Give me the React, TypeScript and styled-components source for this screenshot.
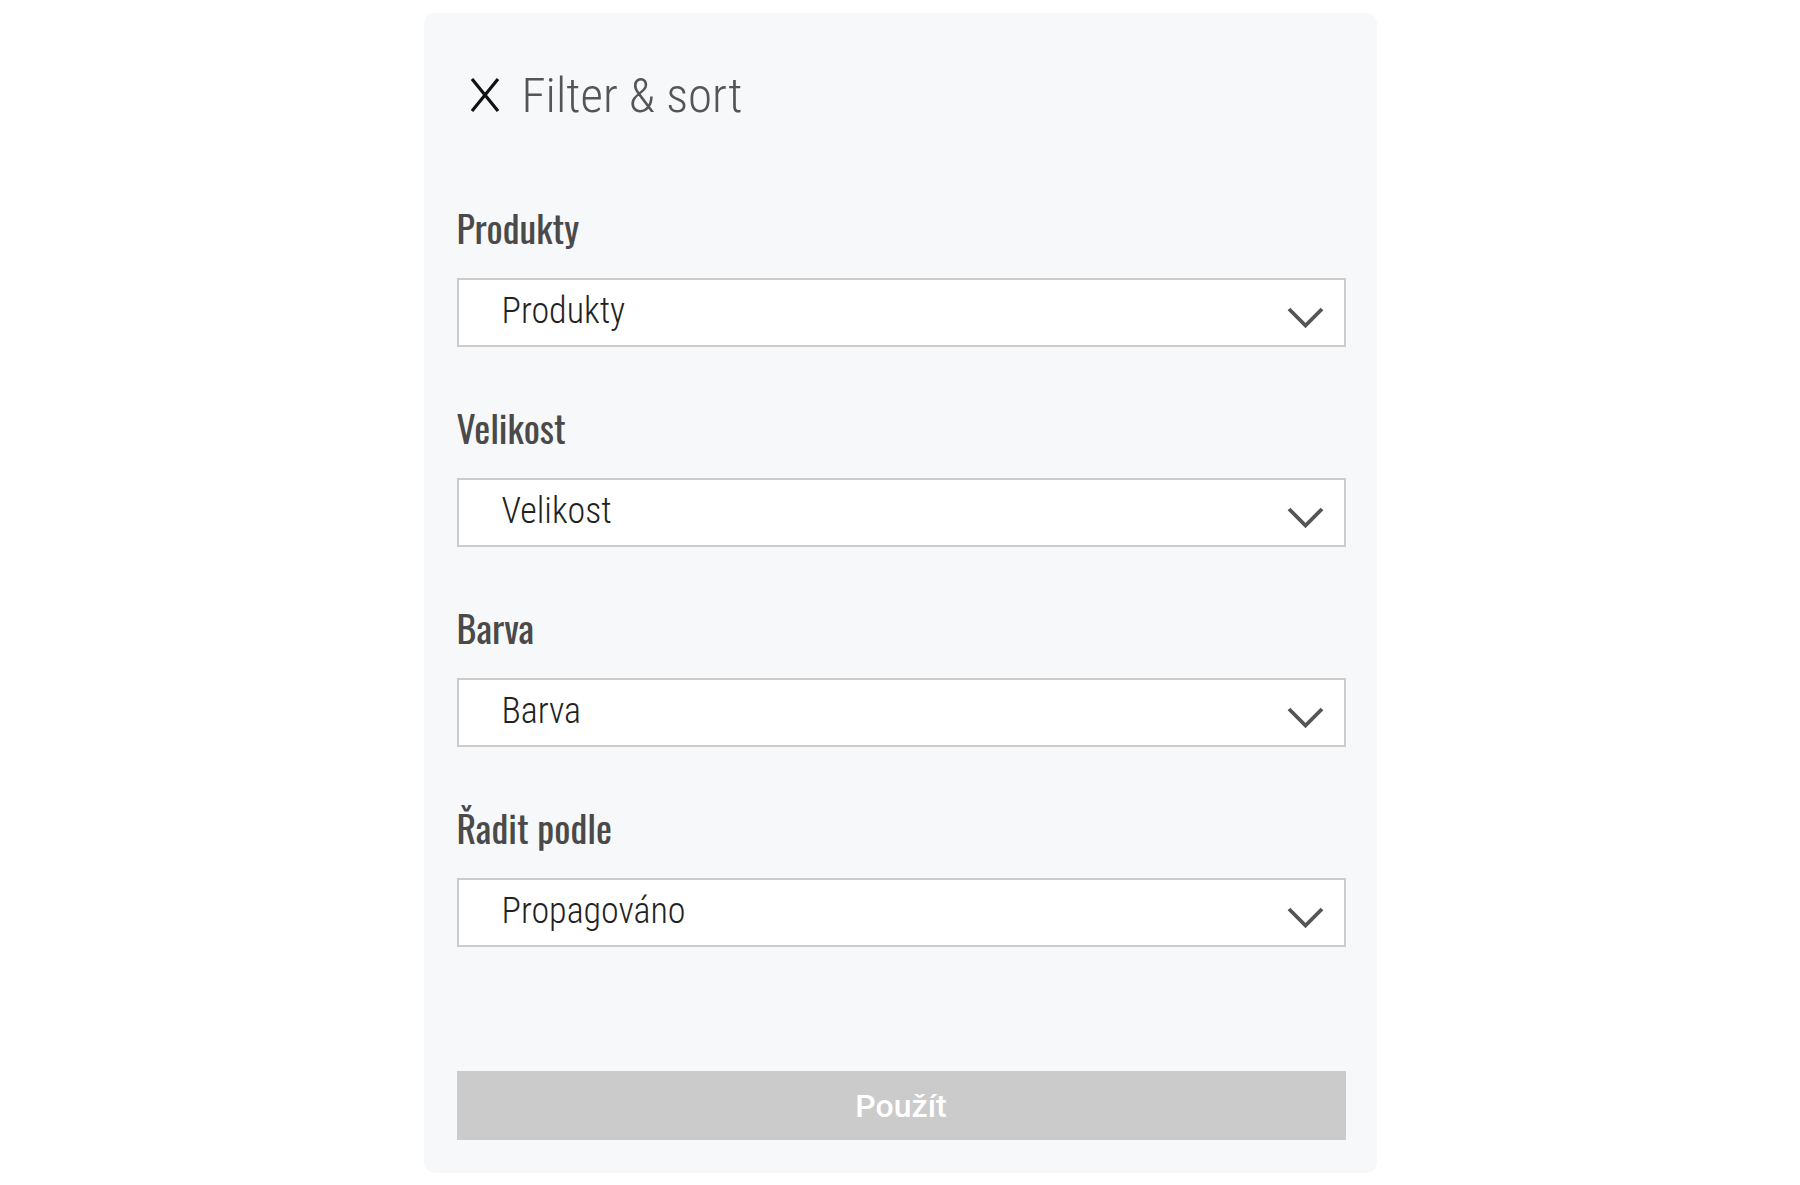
import React from "react";
import styled, { createGlobalStyle } from "styled-components";

const Global = createGlobalStyle`
  html, body { margin: 0; padding: 0; background: #ffffff; }
  body { font-family: "Roboto", "Liberation Sans", sans-serif; }
`;

const Page = styled.div`
  display: flex;
  justify-content: center;
  padding-top: 13px;
`;

const Panel = styled.div`
  width: 953px;
  height: 1160px;
  box-sizing: border-box;
  background: #f7f8fa;
  border-radius: 10px;
  padding: 0 31px 0 33px;
  display: flex;
  flex-direction: column;
`;

const Header = styled.div`
  display: flex;
  align-items: center;
  gap: 22px;
  height: 164px;
  padding-left: 13px;
  margin-bottom: 29px;
`;

const CloseButton = styled.button`
  border: 0;
  background: transparent;
  padding: 0;
  width: 30px;
  height: 36px;
  display: flex;
  align-items: center;
  justify-content: center;
  cursor: pointer;
`;

const Title = styled.h1`
  margin: 0;
  font-family: "Roboto Condensed", "Roboto", sans-serif;
  font-stretch: 80%;
  font-weight: 300;
  font-size: 49px;
  line-height: 1;
  color: #555555;
`;

const Fields = styled.div`
  display: flex;
  flex-direction: column;
  gap: 59px;
`;

const Field = styled.div`
  display: flex;
  flex-direction: column;
  gap: 30px;
`;

const Label = styled.label`
  font-family: "Oswald", "Liberation Sans Narrow", "Roboto Condensed", "Roboto", sans-serif;
  font-stretch: 75%;
  font-weight: 400;
  font-size: 38px;
  line-height: 42px;
  color: #4a4a4a;
`;

const SelectBox = styled.div`
  height: 69px;
  box-sizing: border-box;
  border: 2px solid #cccccc;
  background: #ffffff;
  display: flex;
  align-items: center;
  justify-content: space-between;
  padding: 0 20px 0 43px;
`;

const SelectText = styled.span`
  font-family: "Roboto Condensed", "Roboto", sans-serif;
  font-stretch: 80%;
  font-weight: 300;
  font-size: 36px;
  line-height: 1;
  color: #222222;
  margin-top: -4px;
`;

const Chevron = styled.svg`
  width: 37px;
  height: 21px;
  margin-top: 9px;
`;

const ApplyButton = styled.button`
  margin-top: auto;
  margin-bottom: 33px;
  height: 69px;
  width: 100%;
  border: 0;
  background: #cbcbcb;
  color: #ffffff;
  font-family: "Roboto", sans-serif;
  font-stretch: 100%;
  font-weight: 500;
  font-size: 32px;
  cursor: default;
`;

const fields = [
  { label: "Produkty", value: "Produkty" },
  { label: "Velikost", value: "Velikost" },
  { label: "Barva", value: "Barva" },
  { label: "Řadit podle", value: "Propagováno" },
];

export default function App() {
  return (
    <>
      <Global />
      <Page>
        <Panel>
          <Header>
            <CloseButton aria-label="Close">
              <svg width="30" height="36" viewBox="0 0 30 36">
                <path d="M2 2 L28 34 M28 2 L2 34" stroke="#111" strokeWidth="3.2" fill="none" />
              </svg>
            </CloseButton>
            <Title>Filter &amp; sort</Title>
          </Header>
          <Fields>
            {fields.map((f) => (
              <Field key={f.label}>
                <Label>{f.label}</Label>
                <SelectBox>
                  <SelectText>{f.value}</SelectText>
                  <Chevron viewBox="0 0 37 21">
                    <polyline points="2,2 18.5,18.5 35,2" fill="none" stroke="#555" strokeWidth="3.8" />
                  </Chevron>
                </SelectBox>
              </Field>
            ))}
          </Fields>
          <ApplyButton>Použít</ApplyButton>
        </Panel>
      </Page>
    </>
  );
}
